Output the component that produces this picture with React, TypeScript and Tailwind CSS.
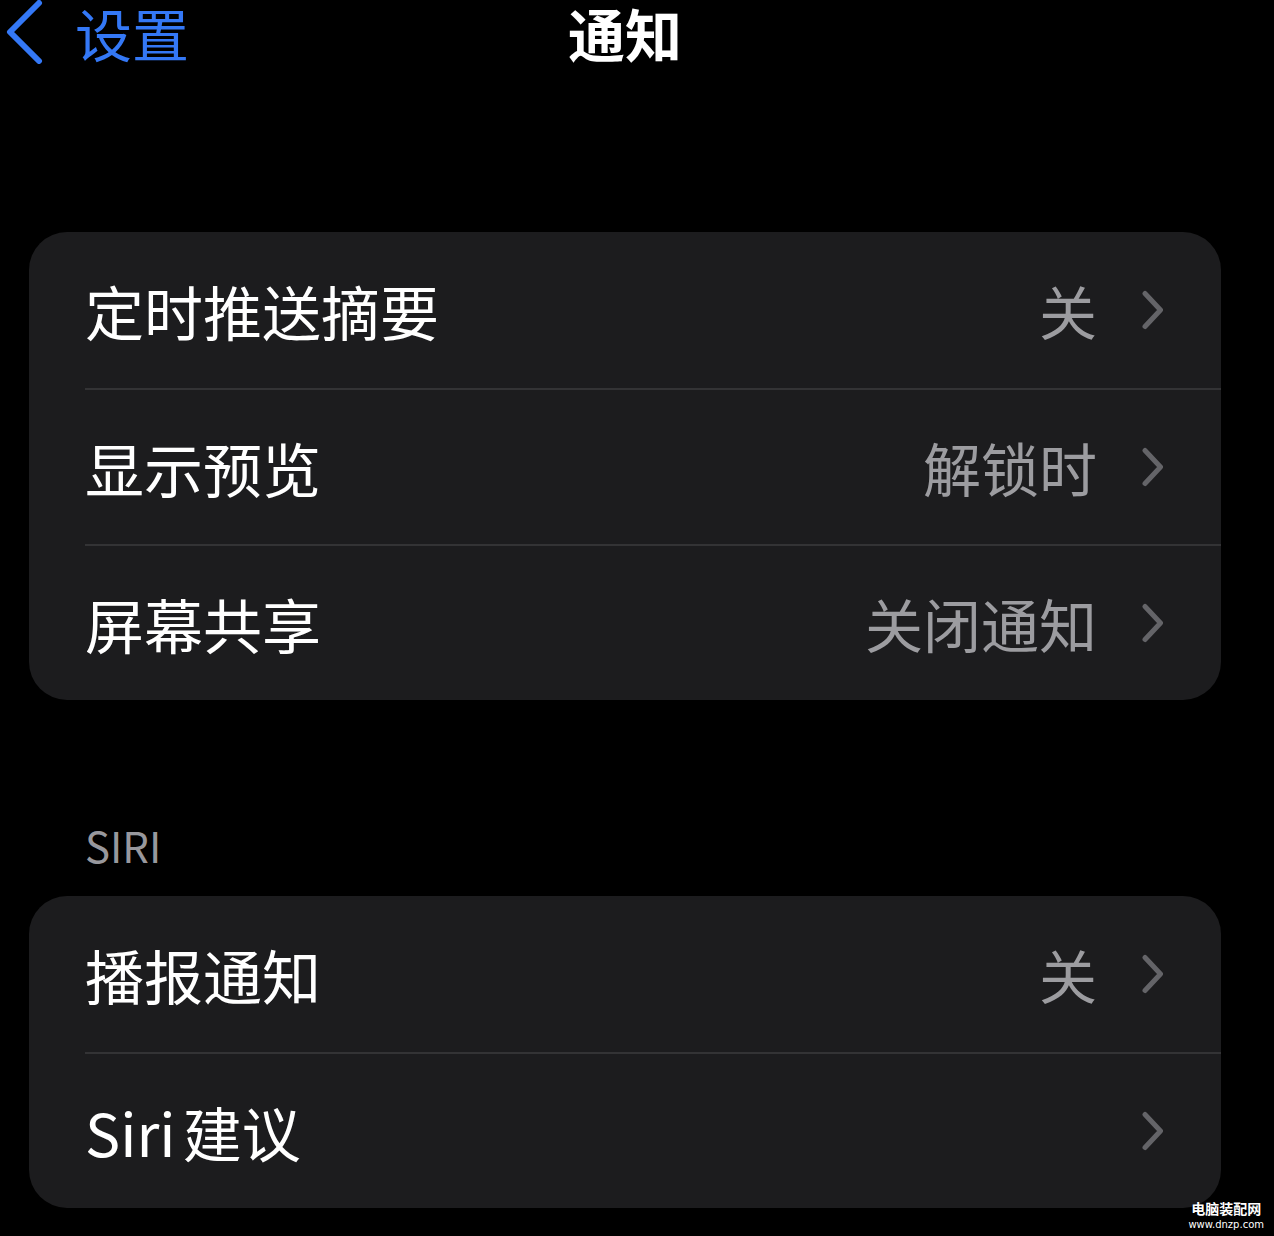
import React from "react";

const cjk = { fontFamily: '"Noto Sans CJK SC", "Noto Sans", sans-serif' };

type Row = { label: string; value?: string };

function Chevron({ className }: { className?: string }) {
  return (
    <svg viewBox="0 0 24 40" className={className} fill="none">
      <path
        d="M4 3.5 L19.5 20 L4 36.5"
        stroke="currentColor"
        strokeWidth="5"
        strokeLinecap="round"
        strokeLinejoin="round"
      />
    </svg>
  );
}

function Card({ rows }: { rows: Row[] }) {
  return (
    <div className="mx-[29px] w-[1192px] overflow-hidden rounded-[38px] bg-[#1c1c1e]">
      {rows.map((row, i) => (
        <div key={row.label} className="flex h-[156px] items-stretch pl-[56px]">
          <div
            className={`flex flex-1 items-center pr-[56px] ${
              i > 0 ? "border-t-2 border-[#333335]" : ""
            }`}
          >
            <span className="text-[59px] leading-none text-white [word-spacing:-6px]">
              {row.label}
            </span>
            <span className="ml-auto text-[58px] leading-none text-[#9c9ca0]">
              {row.value}
            </span>
            <Chevron className="ml-[44px] h-[40px] w-[24px] text-[#646468]" />
          </div>
        </div>
      ))}
    </div>
  );
}

export default function App() {
  return (
    <div className="relative h-[1236px] w-[1274px] overflow-hidden bg-black" style={cjk}>
      <header className="flex h-[64px] items-center">
        <svg viewBox="0 0 40 64" className="ml-[4px] h-[64px] w-[40px] text-[#3478f6]" fill="none">
          <path
            d="M35 3 L6 32 L35 61"
            stroke="currentColor"
            strokeWidth="6"
            strokeLinecap="round"
            strokeLinejoin="round"
          />
        </svg>
        <span className="ml-[31px] text-[57px] leading-[64px] text-[#3478f6]">设置</span>
        <span className="ml-[379px] text-[57px] font-bold leading-[64px] text-white">通知</span>
      </header>

      <div className="mt-[168px]">
        <Card
          rows={[
            { label: "定时推送摘要", value: "关" },
            { label: "显示预览", value: "解锁时" },
            { label: "屏幕共享", value: "关闭通知" },
          ]}
        />
      </div>

      <div className="mt-[124px] pl-[85px] text-[42px] leading-none text-[#98989d]">SIRI</div>

      <div className="mt-[30px]">
        <Card
          rows={[
            { label: "播报通知", value: "关" },
            { label: "Siri 建议" },
          ]}
        />
      </div>

      <div className="absolute bottom-[6px] right-[10px] flex flex-col items-center text-white">
        <span className="text-[14px] font-bold leading-none">电脑装配网</span>
        <span className="mt-[5px] text-[10px] leading-none" style={{ fontFamily: '"DejaVu Sans", sans-serif' }}>
          www.dnzp.com
        </span>
      </div>
    </div>
  );
}
